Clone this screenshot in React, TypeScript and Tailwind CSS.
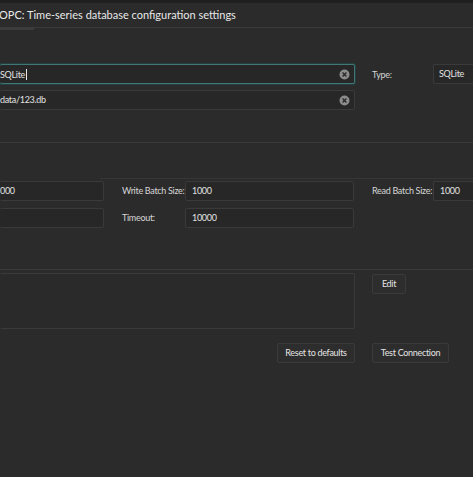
import type { ReactNode } from "react";

const font = { fontFamily: 'Lato, "Noto Sans", Arial, sans-serif' };

function ClearIcon() {
  return (
    <svg width="11" height="11" viewBox="0 0 11 11" className="shrink-0">
      <circle cx="5.5" cy="5.5" r="5" fill="#8c8c8c" />
      <path d="M3.6 3.6 L7.4 7.4 M7.4 3.6 L3.6 7.4" stroke="#2a2a2a" strokeWidth="1.4" />
    </svg>
  );
}

function Field({
  value,
  className = "",
  clear,
  focused,
  cursor,
}: {
  value: string;
  className?: string;
  clear?: boolean;
  focused?: boolean;
  cursor?: boolean;
}) {
  return (
    <div
      className={
        "flex h-[20px] shrink-0 items-center rounded-[2px] bg-[#272727] text-[9px] tracking-[-0.3px] text-[#e2e2e2] " +
        (focused
          ? "border border-[#3f7676] shadow-[0_0_0_1px_#243f3f] "
          : "border border-[#3a3a3a] ") +
        className
      }
    >
      <span className="flex-1 truncate whitespace-nowrap">
        {value}
        {cursor && <span className="ml-[1px] inline-block h-[11px] w-[1px] translate-y-[2px] bg-[#e6e6e6]" />}
      </span>
      {clear && (
        <span className="pr-[4px]">
          <ClearIcon />
        </span>
      )}
    </div>
  );
}

function Label({ children, className = "" }: { children: ReactNode; className?: string }) {
  return (
    <span className={"shrink-0 whitespace-nowrap text-[9px] tracking-[-0.3px] text-[#d6d6d6] " + className}>
      {children}
    </span>
  );
}

function Button({ children, className = "" }: { children: ReactNode; className?: string }) {
  return (
    <button
      type="button"
      className={
        "flex h-[20px] shrink-0 items-center justify-center whitespace-nowrap rounded-[2px] border border-[#3a3a3a] bg-[#2d2d2d] text-[9px] tracking-[-0.3px] text-[#e4e4e4] " +
        className
      }
    >
      {children}
    </button>
  );
}

export default function App() {
  return (
    <div className="h-[477px] w-[473px] overflow-hidden bg-[#2b2b2b]" style={font}>
      <div className="h-[3px] bg-[#1f1f1f]" />
      <header className="flex h-[25px] items-center border-b border-[#3a3a3a] text-[11px] text-[#e8e8e8]">
        <span className="-ml-[1px] whitespace-nowrap">OPC: Time-series database configuration settings</span>
      </header>
      <div className="h-[2px] w-[34px] bg-[#3c3c3c]" />

      <section className="mt-[34px] flex">
        <div className="flex w-[355px] shrink-0 flex-col gap-[6px]">
          <Field value="SQLite" focused clear cursor className="border-l-0 pl-0" />
          <Field value="data/123.db" clear className="border-l-0 pl-0" />
        </div>
        <Label className="ml-[17px] mt-[4px] w-[61px]">Type:</Label>
        <Field value="SQLite" className="w-[50px] border-r-0 pl-[5px]" />
      </section>

      <div className="mt-[32px] border-t border-[#3a3a3a]" />
      <div className="ml-[100px] mt-[35px] border-t border-[#363636]" />

      <section className="mt-[2px] flex flex-col gap-[7px]">
        <div className="flex items-center">
          <Field value="000" className="w-[104px] border-l-0 pl-0" />
          <Label className="ml-[18px] w-[63px]">Write Batch Size:</Label>
          <Field value="1000" className="w-[169px] pl-[6px]" />
          <Label className="ml-[18px] w-[61px]">Read Batch Size:</Label>
          <Field value="1000" className="w-[50px] border-r-0 pl-[6px]" />
        </div>
        <div className="flex items-center">
          <Field value="" className="w-[104px] border-l-0 pl-0" />
          <Label className="ml-[18px] w-[63px]">Timeout:</Label>
          <Field value="10000" className="w-[169px] pl-[6px]" />
        </div>
      </section>

      <div className="mt-[41px] border-t border-[#3a3a3a]" />

      <section className="mt-[3px] flex items-start">
        <div className="h-[56px] w-[355px] shrink-0 rounded-[2px] border border-l-0 border-[#3a3a3a] bg-[#2a2a2a]" />
        <Button className="ml-[17px] mt-[1px] w-[34px]">Edit</Button>
      </section>

      <section className="mt-[14px] flex">
        <Button className="ml-[277px] w-[78px]">Reset to defaults</Button>
        <Button className="ml-[17px] w-[77px]">Test Connection</Button>
      </section>
    </div>
  );
}
